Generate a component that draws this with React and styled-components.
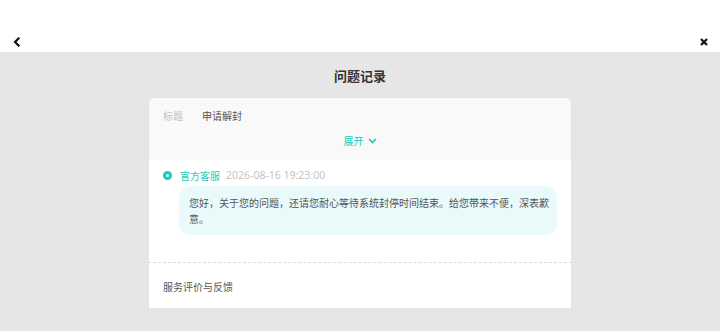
import React from 'react';
import styled, { createGlobalStyle } from 'styled-components';

const GlobalStyle = createGlobalStyle`
  html, body {
    margin: 0;
    padding: 0;
    background: #e6e6e6;
  }
  body {
    font-family: 'Noto Sans CJK SC', 'Noto Sans', sans-serif;
  }
`;

const TEAL = '#1ccbbb';

const Page = styled.div`
  width: 720px;
  height: 331px;
  background: #e6e6e6;
  overflow: hidden;
  display: flex;
  flex-direction: column;
`;

const Header = styled.div`
  height: 52px;
  background: #fff;
  box-sizing: border-box;
  padding: 32px 10px 0 11px;
`;

const NavBar = styled.div`
  height: 20px;
  display: flex;
  align-items: center;
  justify-content: space-between;
`;

const IconButton = styled.span`
  width: 12px;
  height: 12px;
  display: flex;
  align-items: center;
  justify-content: center;
`;

const Title = styled.h1`
  margin: 16px 0 14px;
  font-size: 13px;
  line-height: 16px;
  font-weight: 700;
  color: #333;
  text-align: center;
`;

const Card = styled.div`
  width: 422px;
  margin: 0 auto;
  background: #fff;
  border-radius: 6px 6px 0 0;
  box-shadow: 0 0 2px rgba(0, 0, 0, 0.04);
`;

const Summary = styled.div`
  background: #f9f9f9;
  border-radius: 6px 6px 0 0;
  padding: 10px 14px 11px;
`;

const FieldRow = styled.div`
  display: flex;
  gap: 19px;
  font-size: 10px;
  line-height: 16px;
`;

const FieldLabel = styled.span`
  color: #c2c2c2;
`;

const FieldValue = styled.span`
  color: #555;
`;

const Expand = styled.div`
  margin-top: 9px;
  display: flex;
  justify-content: center;
  align-items: center;
  gap: 4px;
  font-size: 10px;
  line-height: 16px;
  color: ${TEAL};
`;

const Message = styled.div`
  padding: 8px 14px 27px;
`;

const MetaRow = styled.div`
  display: flex;
  align-items: center;
  height: 14px;
  font-size: 10px;
`;

const Dot = styled.span`
  width: 9px;
  height: 9px;
  border-radius: 50%;
  background: ${TEAL};
  display: flex;
  align-items: center;
  justify-content: center;
  margin-right: 8px;

  &::after {
    content: '';
    width: 3px;
    height: 3px;
    border-radius: 50%;
    background: #fff;
  }
`;

const Sender = styled.span`
  color: ${TEAL};
  margin-right: 6px;
`;

const Time = styled.span`
  color: #c4c4c4;
  font-family: 'Noto Sans', sans-serif;
  font-size: 10.5px;
`;

const Bubble = styled.div`
  margin: 4px 0 0 16px;
  background: #eafafb;
  border-radius: 12px;
  padding: 9px 2px 8px 10px;
  font-size: 10px;
  line-height: 16px;
  color: #555;
`;

const Divider = styled.div`
  margin: 0 -6px;
  border-top: 1px dashed #dcdcdc;
`;

const Feedback = styled.div`
  padding: 16px 14px 13px;
  font-size: 10px;
  line-height: 16px;
  color: #555;
`;

const BackIcon = () => (
  <svg width="10" height="10" viewBox="0 0 10 10">
    <path d="M6.5 1.5 L3 5 L6.5 8.5" fill="none" stroke="#111" strokeWidth="2.2" strokeLinecap="square" />
  </svg>
);

const CloseIcon = () => (
  <svg width="10" height="10" viewBox="0 0 10 10">
    <path d="M2 2 L8 8 M8 2 L2 8" fill="none" stroke="#111" strokeWidth="2.2" />
  </svg>
);

const ChevronDown = () => (
  <svg width="9" height="6" viewBox="0 0 9 6">
    <path d="M1 1 L4.5 4.5 L8 1" fill="none" stroke={TEAL} strokeWidth="1.6" />
  </svg>
);

const App = () => (
  <>
    <GlobalStyle />
    <Page>
      <Header>
        <NavBar>
          <IconButton><BackIcon /></IconButton>
          <IconButton><CloseIcon /></IconButton>
        </NavBar>
      </Header>
      <Title>问题记录</Title>
      <Card>
        <Summary>
          <FieldRow>
            <FieldLabel>标题</FieldLabel>
            <FieldValue>申请解封</FieldValue>
          </FieldRow>
          <Expand>
            展开 <ChevronDown />
          </Expand>
        </Summary>
        <Message>
          <MetaRow>
            <Dot />
            <Sender>官方客服</Sender>
            <Time>2026-08-16 19:23:00</Time>
          </MetaRow>
          <Bubble>
            您好，关于您的问题，还请您耐心等待系统封停时间结束。给您带来不便，深表歉意。
          </Bubble>
        </Message>
        <Divider />
        <Feedback>服务评价与反馈</Feedback>
      </Card>
    </Page>
  </>
);

export default App;
